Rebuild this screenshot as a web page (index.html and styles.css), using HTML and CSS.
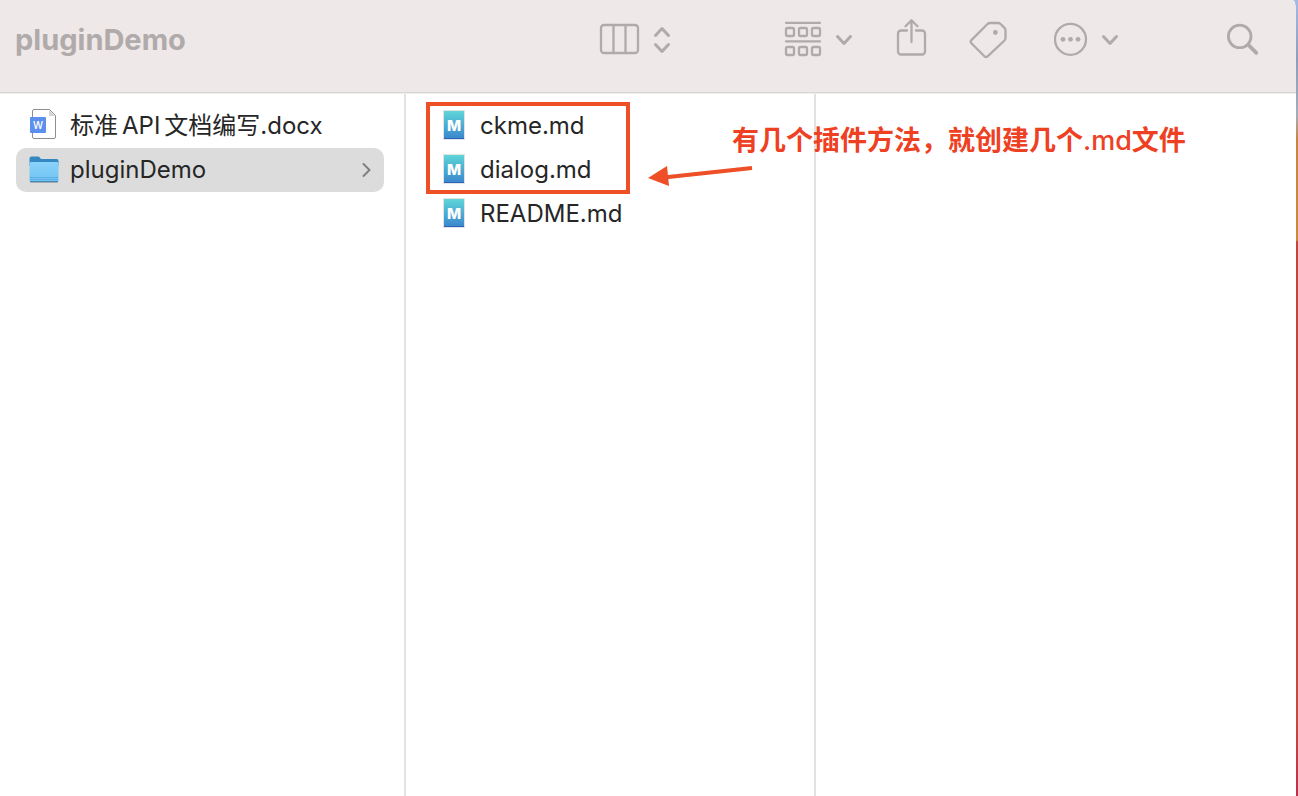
FILE: index.html
```html
<!DOCTYPE html>
<html lang="zh-CN">
<head>
    <meta charset="UTF-8">
    <meta name="viewport" content="width=device-width, initial-scale=1.0">
    <title>pluginDemo</title>
    <link rel="stylesheet" href="styles.css">
</head>
<body>
    <!-- shared file icons -->
    <svg class="defs" width="0" height="0" aria-hidden="true">
        <defs>
            <linearGradient id="md-fill" x1="0" y1="0" x2="0" y2="1">
                <stop offset="0" stop-color="#5ed5d8"/>
                <stop offset="1" stop-color="#3a86cc"/>
            </linearGradient>
            <linearGradient id="folder-fill" x1="0" y1="0" x2="0" y2="1">
                <stop offset="0" stop-color="#8ad3fb"/>
                <stop offset="1" stop-color="#6fc2f3"/>
            </linearGradient>
            <symbol id="icon-md" viewBox="0 0 32 32">
                <rect x="5" y="1" width="22" height="30" fill="#e3e3e3"/>
                <rect x="6" y="2" width="20" height="28" fill="url(#md-fill)"/>
                <rect x="6" y="29" width="20" height="1" fill="#2a62c0"/>
                <text x="16" y="22" class="md-letter">M</text>
            </symbol>
        </defs>
    </svg>

    <div class="window">
        <header class="toolbar">
            <h1 class="title">pluginDemo</h1>
            <div class="tools">
                <button type="button" class="tool tool-view" aria-label="View">
                    <svg width="74" height="40" viewBox="599 19 74 40">
                        <rect x="601" y="25" width="37" height="28" rx="3"/>
                        <path d="M613.5 25v28M625.5 25v28"/>
                        <path class="thick" d="M655.5 35.5l6.5-7 6.5 7M655.5 44.5l6.5 7 6.5-7"/>
                    </svg>
                </button>
                <button type="button" class="tool tool-group" aria-label="Group">
                    <svg width="70" height="40" viewBox="784 19 70 40">
                        <path d="M786 22.8h34M786 41.4h34"/>
                        <rect x="786" y="28" width="8" height="8" rx="1.5"/>
                        <rect x="799" y="28" width="8" height="8" rx="1.5"/>
                        <rect x="812" y="28" width="8" height="8" rx="1.5"/>
                        <rect x="786" y="47" width="8" height="8" rx="1.5"/>
                        <rect x="799" y="47" width="8" height="8" rx="1.5"/>
                        <rect x="812" y="47" width="8" height="8" rx="1.5"/>
                        <path class="thick" d="M837.5 36.5l6.5 7 6.5-7"/>
                    </svg>
                </button>
                <button type="button" class="tool" aria-label="Share">
                    <svg width="31" height="40" viewBox="896 19 31 40">
                        <path d="M907 30.5h-6a3 3 0 0 0-3 3v18a3 3 0 0 0 3 3h21a3 3 0 0 0 3-3v-18a3 3 0 0 0-3-3h-6"/>
                        <path d="M911.5 42v-21.5M905.5 26.2l6-6 6 6"/>
                    </svg>
                </button>
                <button type="button" class="tool" aria-label="Tags">
                    <svg width="38" height="40" viewBox="969 19 38 40">
                        <path d="M990 23h8q1.500 0 2.600 1l3.900 3.900q1 1 1 2.600v7.500q0 1.500-1 2.500L987.600 56.300q-1.600 1.500-3.200 0L971.400 43.300q-1.500-1.600 0-3.200L987.500 24q1-1 2.500-1z"/>
                        <circle class="dot" cx="995.400" cy="32.500" r="2.400"/>
                    </svg>
                </button>
                <button type="button" class="tool tool-more" aria-label="More">
                    <svg width="66" height="40" viewBox="1054 19 66 40">
                        <circle cx="1070.500" cy="39.300" r="15.500"/>
                        <circle class="dot" cx="1063" cy="39.300" r="2.400"/>
                        <circle class="dot" cx="1070.500" cy="39.300" r="2.400"/>
                        <circle class="dot" cx="1078" cy="39.300" r="2.400"/>
                        <path class="thick" d="M1103.500 36.500l6.500 7 6.500-7"/>
                    </svg>
                </button>
                <button type="button" class="tool tool-search" aria-label="Search">
                    <svg width="32" height="40" viewBox="1227 19 32 40">
                        <circle class="lens" cx="1239.700" cy="36.400" r="11.300"/>
                        <path class="handle" d="M1248.500 45l7.800 7.800"/>
                    </svg>
                </button>
            </div>
        </header>

        <main class="browser">
            <ul class="column">
                <li>
                    <a class="file" href="#">
                        <svg class="file-icon" viewBox="0 1 32 32" aria-hidden="true">
                            <path d="M6 1.500h15.500l6 6V29a1.500 1.500 0 0 1-1.500 1.500H6A1.500 1.500 0 0 1 4.500 29V3A1.500 1.500 0 0 1 6 1.500z" fill="#fff" stroke="#8f8f8f"/>
                            <path d="M21 2l6 6h-6z" fill="#d4d4d4"/>
                            <rect x="2" y="9" width="16" height="16" rx="1" fill="#5c8fee"/>
                            <text x="10" y="21" class="doc-letter">W</text>
                        </svg>
                        <span class="file-name">标准<span class="latin">API</span>文档编写.docx</span>
                    </a>
                </li>
                <li>
                    <a class="file selected" href="#">
                        <svg class="file-icon" viewBox="0 -1 32 32" aria-hidden="true">
                            <rect x="2" y="27" width="28" height="2" rx="1" fill="#a3abb0"/>
                            <path d="M1.500 4.500q0-2 2-2H10q1 0 1.800 1l1.200 1.500h15.500q2 0 2 2V12h-29z" fill="#3587c1"/>
                            <rect x="1.500" y="8" width="29" height="20" rx="1.500" fill="url(#folder-fill)"/>
                            <path d="M2 23.500h28M2 25.500h28" stroke="#5db0e4" fill="none"/>
                            <path d="M2 27.500h28" stroke="#4289b8" fill="none"/>
                        </svg>
                        <span class="file-name">pluginDemo</span>
                        <svg class="arrow" width="10" height="14" viewBox="0 0 10 14" aria-hidden="true">
                            <path d="M1.500 1l6 6-6 6"/>
                        </svg>
                    </a>
                </li>
            </ul>
            <ul class="column">
                <li>
                    <a class="file" href="#">
                        <svg class="file-icon" aria-hidden="true"><use href="#icon-md"/></svg>
                        <span class="file-name">ckme.md</span>
                    </a>
                </li>
                <li>
                    <a class="file" href="#">
                        <svg class="file-icon" aria-hidden="true"><use href="#icon-md"/></svg>
                        <span class="file-name">dialog.md</span>
                    </a>
                </li>
                <li>
                    <a class="file" href="#">
                        <svg class="file-icon" aria-hidden="true"><use href="#icon-md"/></svg>
                        <span class="file-name">README.md</span>
                    </a>
                </li>
            </ul>
            <div class="preview"></div>

            <!-- red notes drawn over the columns -->
            <div class="mark-box"></div>
            <svg class="mark-arrow" width="106" height="24" viewBox="0 0 106 24" aria-hidden="true">
                <path d="M18 13.200L104 4" stroke="#ee4f27" stroke-width="4"/>
                <path d="M0 14L19 2l2 20z" fill="#ee4f27"/>
            </svg>
            <p class="mark-text">有几个插件方法，就创建几个<span class="mark-ext">.md</span>文件</p>
        </main>
    </div>
</body>
</html>
```
FILE: styles.css
```css
* {
    margin: 0;
    padding: 0;
    box-sizing: border-box;
}

body {
    min-height: 100vh;
    padding-right: 2px;
    display: flex;
    font-family: Inter, "Noto Sans CJK SC", sans-serif;
    background: linear-gradient(#a4b9e4 0, #8d9dbb 60px, #a3adba 115px, #c78440 140px, #c98a3c 240px, #c0453c 242px, #c24a3e 720px, #bd2f4c 796px);
}

.defs {
    position: absolute;
}

.window {
    flex: 1;
    display: flex;
    flex-direction: column;
    background: #fff;
    border-top-right-radius: 3px 12px;
    overflow: hidden;
}

/* toolbar */
.toolbar {
    height: 93px;
    padding: 0 37px 14px 15px;
    display: flex;
    align-items: center;
    justify-content: space-between;
    background: #eee8e8;
    border-bottom: 1px solid #d8d4d5;
}

.title {
    padding-top: 2px;
    font-size: 29px;
    line-height: 40px;
    font-weight: 700;
    color: #b0aaaa;
}

.tools {
    display: flex;
    align-items: center;
    gap: 42px;
}

.tool {
    border: none;
    background: none;
    cursor: pointer;
}

.tool-view {
    margin-right: 69px;
}

.tool-more {
    margin-left: 5px;
}

.tool-search {
    margin-left: 65px;
}

.tool svg {
    display: block;
    fill: none;
    stroke: #b0aaaa;
    stroke-width: 2.3;
    stroke-linecap: round;
    stroke-linejoin: round;
}

.tool .thick {
    stroke-width: 3;
}

.tool .lens {
    stroke-width: 2.8;
}

.tool .handle {
    stroke-width: 3.8;
}

.tool .dot {
    fill: #b0aaaa;
    stroke: none;
}

/* columns */
.browser {
    flex: 1;
    display: grid;
    grid-template-columns: 406px 410px 1fr;
    position: relative;
    border-top: 1px solid #f0eeee;
}

.column {
    padding: 10px 20px;
    list-style: none;
    border-right: 2px solid #e2e2e2;
}

.column:first-child {
    padding-left: 16px;
}

.file {
    height: 44px;
    padding: 0 12px;
    display: flex;
    align-items: center;
    gap: 10px;
    border-radius: 10px;
    color: #262626;
    font-size: 24px;
    line-height: 32px;
    text-decoration: none;
    white-space: nowrap;
}

.selected {
    background: #dcdcdc;
}

.file-icon {
    width: 32px;
    height: 32px;
    margin-bottom: 2px;
    flex: none;
}

.file-name {
    flex: 1;
}

.latin {
    margin: 0 4px;
}

.arrow {
    fill: none;
    stroke: #7d7d7d;
    stroke-width: 1.8;
    stroke-linecap: round;
    stroke-linejoin: round;
}

.md-letter {
    font: 800 15px Inter, sans-serif;
    fill: #fff;
    text-anchor: middle;
}

.doc-letter {
    font: 500 10px Inter, sans-serif;
    fill: #fff;
    text-anchor: middle;
}

/* notes */
.mark-box {
    position: absolute;
    left: 426px;
    top: 8px;
    width: 204px;
    height: 92px;
    border: 4px solid #ee4f27;
}

.mark-arrow {
    position: absolute;
    left: 648px;
    top: 70px;
}

.mark-text {
    position: absolute;
    left: 732px;
    top: 27px;
    font-size: 27px;
    line-height: 40px;
    font-weight: 600;
    color: #ee4023;
    white-space: nowrap;
}

.mark-ext {
    font-weight: 500;
}
```
